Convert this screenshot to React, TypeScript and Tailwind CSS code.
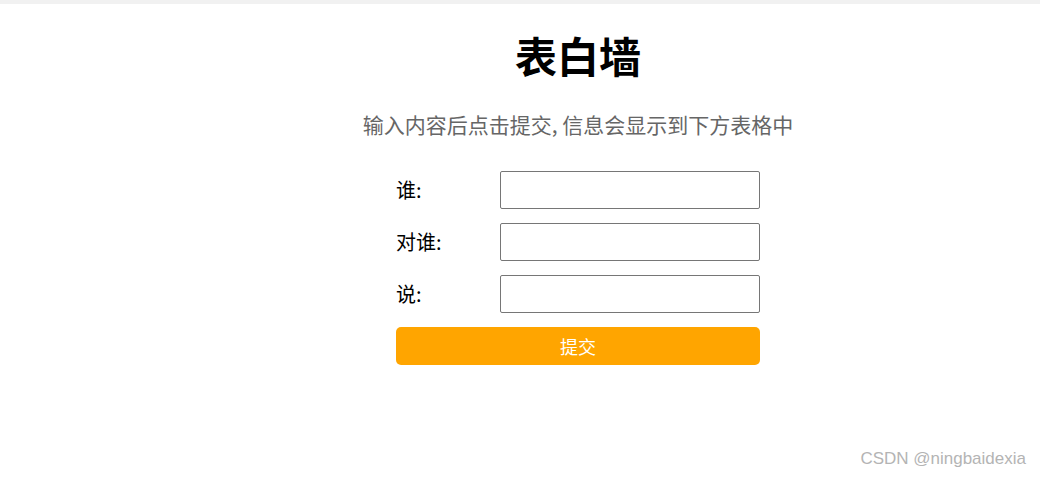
export default function App() {
  const rows = ['谁:', '对谁:', '说:'];
  return (
    <div
      className="relative h-[480px] w-[1040px] overflow-hidden bg-white"
      style={{ fontFamily: '"Noto Sans CJK SC", "Microsoft YaHei", sans-serif' }}
    >
      {/* barre grise en haut */}
      <div className="h-[4px] bg-[#f1f1f1]" />

      <div className="flex flex-col items-center pl-[116px]">
        <h1 className="mt-[23px] text-[42px] font-bold leading-[56px] text-black">表白墙</h1>
        <p className="mt-[27px] text-[21px] leading-[28px] text-[#666]">
          输入内容后点击提交, 信息会显示到下方表格中
        </p>

        <div className="mt-[33px] flex w-[364px] flex-col gap-[14px]">
          {rows.map((label) => (
            <div key={label} className="flex h-[38px] items-center">
              <span className="w-[104px] text-[20px] text-black">{label}</span>
              <input className="h-[38px] w-[260px] rounded-[2px] border border-[#767676] bg-white px-2 outline-none" />
            </div>
          ))}
          <button className="h-[38px] w-full rounded-[5px] bg-[#ffa500] text-[18px] text-white">提交</button>
        </div>
      </div>

      <span
        className="absolute right-[14px] bottom-[9px] text-[17px] text-[#b4b4b4]"
        style={{ fontFamily: '"Liberation Sans Narrow", "Liberation Sans", Arial, sans-serif' }}
      >
        CSDN @ningbaidexia
      </span>
    </div>
  );
}
